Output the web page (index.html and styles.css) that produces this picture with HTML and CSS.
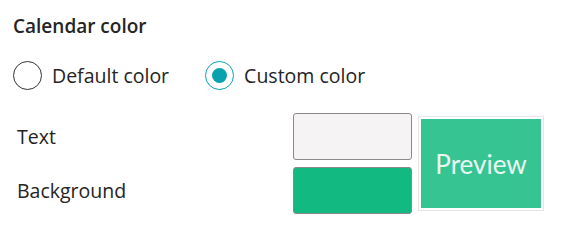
FILE: index.html
```html
<!DOCTYPE html>
<html lang="en">
<head>
<meta charset="UTF-8">
<title>Calendar color</title>
<link rel="stylesheet" href="styles.css">
</head>
<body>
  <div class="panel">
    <h3 class="title">Calendar color</h3>
    <div class="choices">
      <label class="choice">
        <span class="radio"></span>
        <span>Default color</span>
      </label>
      <label class="choice">
        <span class="radio checked"></span>
        <span>Custom color</span>
      </label>
    </div>
    <div class="colors">
      <div class="labels">
        <div class="label">Text</div>
        <div class="label">Background</div>
      </div>
      <div class="swatches">
        <div class="swatch light"></div>
        <div class="swatch green"></div>
      </div>
      <div class="preview-box">
        <div class="preview">Preview</div>
      </div>
    </div>
  </div>
</body>
</html>
```

FILE: styles.css
```css
body {
  margin: 0;
  font-family: "Open Sans", "Noto Sans", sans-serif;
  color: #242424;
  background: #fff;
}
.panel {
  padding: 14px 13px;
}
.title {
  margin: 0;
  font-size: 19px;
  font-weight: 600;
  line-height: 24px;
}
.choices {
  display: flex;
  margin-top: 23px;
  gap: 36px;
}
.choice {
  display: flex;
  align-items: center;
  gap: 10px;
  font-size: 19.5px;
  line-height: 29px;
}
.radio {
  width: 27px;
  height: 27px;
  border: 1px solid #333;
  border-radius: 50%;
  box-sizing: content-box;
  display: flex;
  align-items: center;
  justify-content: center;
}
.radio.checked {
  border-color: #0aa3ad;
}
.radio.checked::after {
  content: "";
  width: 15px;
  height: 15px;
  border-radius: 50%;
  background: #0aa3ad;
}
.colors {
  display: flex;
  margin-top: 23px;
}
.labels {
  width: 276px;
  padding-left: 4px;
  font-size: 19.5px;
}
.label {
  height: 47px;
  line-height: 47px;
  margin-bottom: 7px;
}
.swatches {
  display: flex;
  flex-direction: column;
  gap: 7px;
}
.swatch {
  width: 117px;
  height: 45px;
  border: 1px solid #8a8a8a;
  border-radius: 3px;
}
.light {
  background: #f5f3f4;
}
.green {
  background: #12b981;
}
.preview-box {
  margin-left: 6px;
  margin-top: 3px;
  border: 1px solid #e6e6e6;
  padding: 2px;
  height: 89px;
}
.preview {
  width: 120px;
  height: 89px;
  background: #36c493;
  color: #eaf7f1;
  font-family: Lato, sans-serif;
  font-size: 26px;
  display: flex;
  align-items: center;
  justify-content: center;
}
```
